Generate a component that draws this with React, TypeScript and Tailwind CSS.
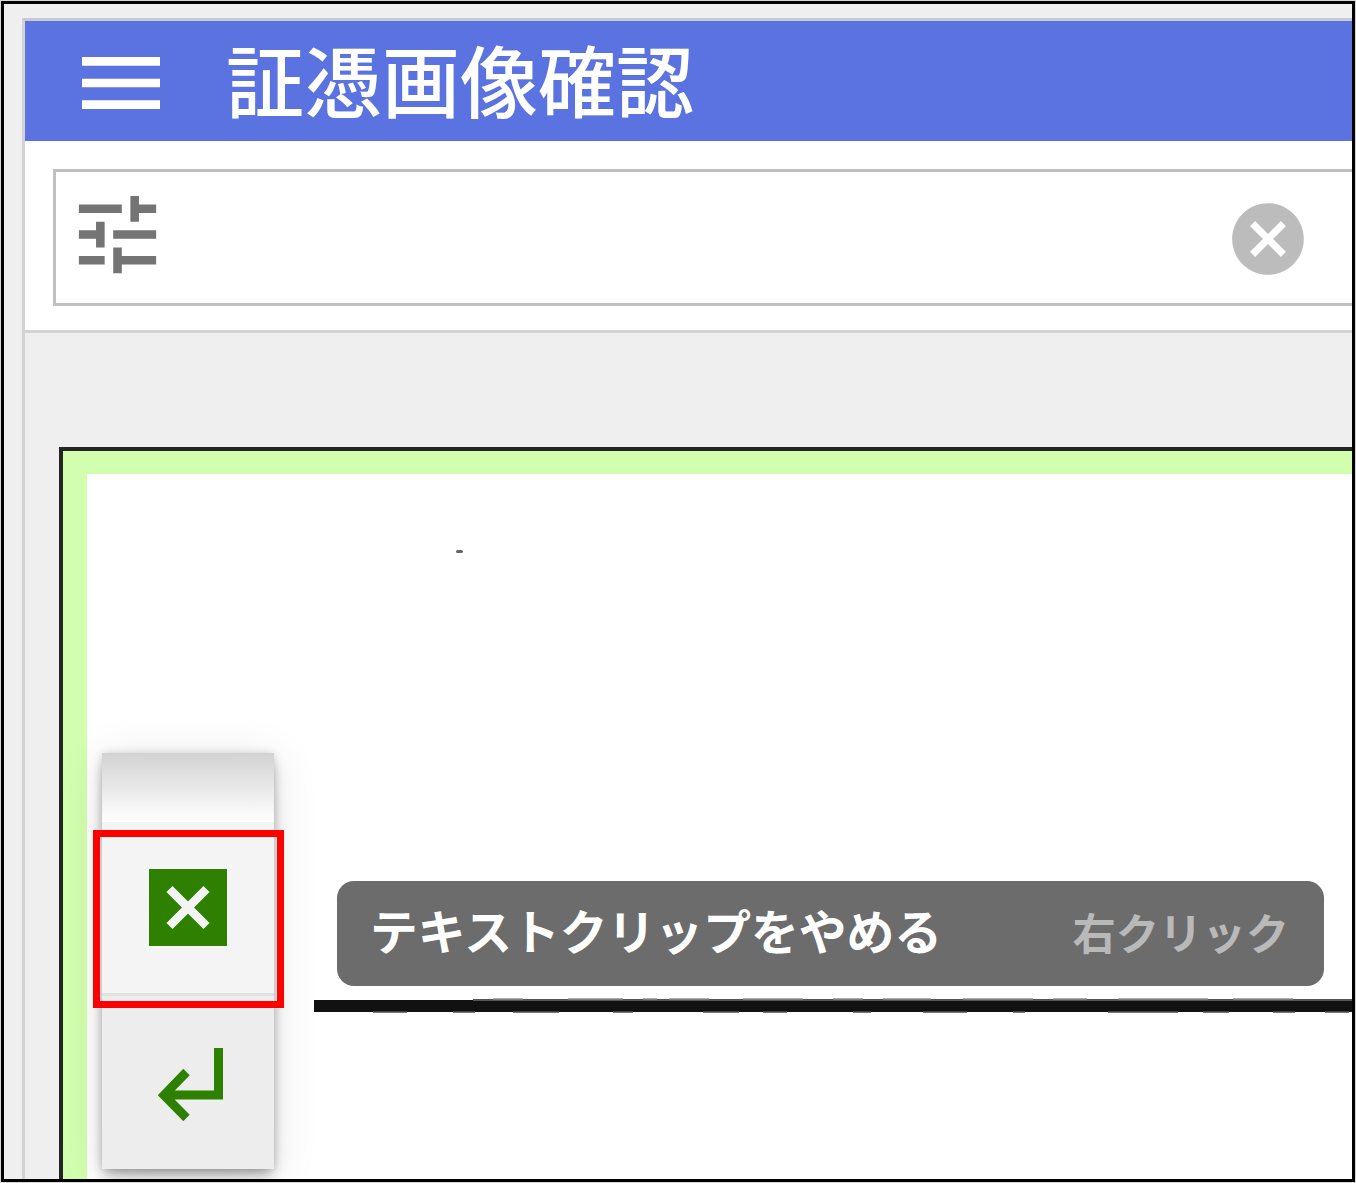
const MenuIcon = () => (
  <svg className="mt-[3px] h-[104px] w-[104px] shrink-0 fill-white" viewBox="0 0 24 24">
    <path d="M3 18h18v-2H3v2zm0-5h18v-2H3v2zm0-7v2h18V6H3z" />
  </svg>
)

const TuneIcon = () => (
  <svg className="h-[103px] w-[103px] shrink-0 fill-[#747474]" viewBox="0 0 24 24">
    <path d="M3 17v2h6v-2H3zM3 5v2h10V5H3zm10 16v-2h8v-2h-8v-2h-2v6h2zM7 9v2H3v2h4v2h2V9H7zm14 4v-2H11v2h10zm-6-4h2V7h4V5h-4V3h-2v6z" />
  </svg>
)

const ClearIcon = () => (
  <svg className="h-[86px] w-[86px] shrink-0 fill-[#bcbcbc]" viewBox="0 0 24 24">
    <path d="M12 2C6.47 2 2 6.47 2 12s4.47 10 10 10 10-4.47 10-10S17.53 2 12 2zm5 13.59L15.59 17 12 13.41 8.41 17 7 15.59 10.59 12 7 8.41 8.41 7 12 10.59 15.59 7 17 8.41 13.41 12 17 15.59z" />
  </svg>
)

const StopClipIcon = () => (
  <svg className="h-[78px] w-[78px]" viewBox="0 0 78 78">
    <rect width="78" height="77" fill="#2d8000" />
    <path d="M20.5 20 57.5 57M57.5 20 20.5 57" stroke="#f4f4f4" strokeWidth="8.6" />
  </svg>
)

const ReturnIcon = () => (
  <svg className="mt-[4px] h-[73px] w-[66px]" viewBox="0 0 66 73">
    <path
      d="M60.5 0V47H9M28.5 24 6 47.2 28.5 70"
      fill="none"
      stroke="#2d8000"
      strokeWidth="9"
    />
  </svg>
)

const Header = () => (
  <header className="flex h-[120px] shrink-0 items-center bg-[#5b73e1] pl-[44px] text-white">
    <MenuIcon />
    <h1 className="ml-[53px] -mt-[7px] text-[78px] leading-[120px] font-medium whitespace-nowrap">証憑画像確認</h1>
  </header>
)

const SearchBar = () => (
  <div className="h-[192px] shrink-0 border-b-[3px] border-[#d3d3d3] bg-white pt-[28px] pl-[28px]">
    <div className="flex h-[137px] items-center justify-between border-[3px] border-r-0 border-[#c0c0c0] pr-[41px] pl-[10px]">
      <div className="-mt-[7px]">
        <TuneIcon />
      </div>
      <div className="mt-[3px]">
        <ClearIcon />
      </div>
    </div>
  </div>
)

// Floating tool palette over the document
const ToolPalette = () => (
  <div className="absolute top-[279px] left-[15px] w-[172px] bg-[#f4f4f4] shadow-[0_8px_13px_-3px_rgba(0,0,0,0.35),0_0_8px_rgba(0,0,0,0.12),0_6px_42px_rgba(0,0,0,0.12)]">
    <div className="h-[69px] bg-linear-to-b from-[#d2d2d2] to-white" />
    <div className="flex h-[174px] items-center justify-center border-b-[3px] border-[#e2e2e2]">
      <StopClipIcon />
    </div>
    <div className="flex h-[173px] items-center justify-center bg-[#ededed] pl-[5px]">
      <ReturnIcon />
    </div>
    <div className="absolute top-[77px] -left-[9px] h-[178px] w-[191px] border-[7px] border-[#ff0000]" />
  </div>
)

const Tooltip = () => (
  <div className="absolute top-[407px] left-[250px] flex h-[105px] w-[987px] items-center justify-between rounded-[17px] bg-[#6c6c6c] pr-[35px] pl-[33px] whitespace-nowrap">
    <span className="-mt-[8px] text-[47.8px] font-bold text-white">テキストクリップをやめる</span>
    <span className="-mt-[5px] text-[43.3px] font-bold text-[#b9b9b9]">右クリック</span>
  </div>
)

const ROUGH_TOP = [
  [180, 30], [255, 55], [330, 14], [356, 40], [430, 60], [520, 30], [570, 48], [650, 70], [740, 34], [805, 90], [920, 60],
]
const ROUGH_BOTTOM = [
  [60, 34], [140, 22], [200, 46], [300, 20], [390, 36], [450, 24], [540, 18], [610, 44], [700, 12], [795, 70], [890, 26], [960, 22], [1012, 24],
]

// Thick ruled line of the scanned paper, with its uneven edges
const ScannedRule = () => (
  <svg className="absolute top-[522px] left-[226px] h-[20px] w-[1039px]" viewBox="0 0 1039 20">
    <rect x="1" y="4" width="1038" height="12" fill="#111" />
    <rect x="160" y="3" width="879" height="2" fill="#555" />
    {ROUGH_TOP.map(([x, w]) => (
      <rect key={x} x={x} y="2" width={w} height="1.5" fill="#aaa" />
    ))}
    {ROUGH_BOTTOM.map(([x, w]) => (
      <rect key={x} x={x} y="15.5" width={w} height="1.5" fill="#777" />
    ))}
  </svg>
)

const DocumentView = () => (
  <main className="flex min-h-0 flex-1 pt-[114px] pl-[34px]">
    <div className="flex flex-1 border-t-4 border-l-4 border-[#242424] bg-[#d2ffae] pt-[23px] pl-[24px]">
      <div className="relative flex-1 bg-white">
        <span className="absolute top-[76px] left-[369px] h-[3px] w-[7px] rounded-[2px] bg-[#666]" />
        <ScannedRule />
        <ToolPalette />
        <Tooltip />
      </div>
    </div>
  </main>
)

const App = () => {
  return (
    <div className="h-[1183px] w-[1356px] bg-[#d8d8d8] p-px font-['Noto_Sans_CJK_JP','Noto_Sans',sans-serif]">
      <div className="flex h-full flex-col overflow-hidden border-[3px] border-black bg-[#efefef] pt-[14px] pl-[18px]">
        <div className="flex min-h-0 flex-1 flex-col border-t-[3px] border-l-[3px] border-t-[#c9c9cf] border-l-[#d3d3d3]">
          <Header />
          <SearchBar />
          <DocumentView />
        </div>
      </div>
    </div>
  )
}

export default App
